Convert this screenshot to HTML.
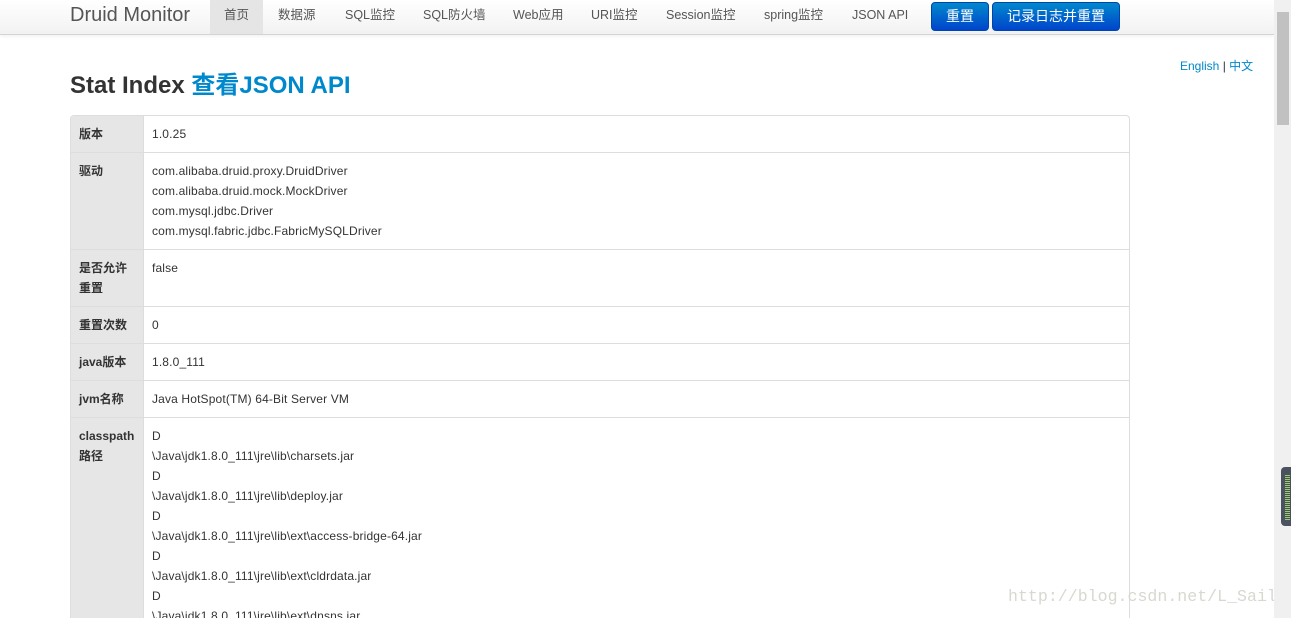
<!DOCTYPE html>
<html><head><meta charset="utf-8"><style>
*{margin:0;padding:0;box-sizing:border-box}
html{width:1291px;height:618px;overflow:hidden}
body{width:1291px;height:618px;overflow:hidden;background:#fff;font-family:"Liberation Sans","Noto Sans CJK SC",sans-serif;color:#333;font-size:12px;position:relative}
.nav{position:absolute;left:0;top:0;width:1274px;height:35px;background:linear-gradient(#fff,#f2f2f2);border-bottom:1px solid #d4d4d4;box-shadow:0 1px 4px rgba(0,0,0,.07)}
.brand{position:absolute;left:70px;top:4px;font-size:20px;color:#555}
.ni{position:absolute;top:0;height:34px;line-height:31px;font-size:12.5px;color:#555}
.act{background:#e5e5e5;left:210px;width:53px;text-align:center}
.btn{position:absolute;top:2px;height:29px;background:linear-gradient(#0088cc,#0044cc);border:1px solid #0044aa;border-radius:4px;color:#fff;font-size:14px;text-align:center;line-height:27px}
h1{position:absolute;left:70px;top:65px;font-size:24px;font-weight:bold;color:#333}
h1 span{color:#0088cc}
.lang{position:absolute;left:1180px;top:57px;font-size:12px;color:#0088cc}
.tbl{position:absolute;left:70px;top:115px;width:1060px;height:503px;border:1px solid #ddd;border-bottom:none;border-radius:4px 4px 0 0;overflow:hidden}
.lab{position:absolute;left:0;top:0;width:73px;height:100%;background:#e6e6e6;border-right:1px solid #ddd}
.row{position:absolute;left:0;width:100%;border-top:1px solid #ddd}
.l{position:absolute;left:8px;top:8px;font-weight:bold;line-height:20px;width:58px;word-break:break-all}
.v{position:absolute;left:81px;top:8px;line-height:20px;letter-spacing:.15px}
.sb{position:absolute;left:1274px;top:0;width:17px;height:618px;background:#f0f0f0}
.th{position:absolute;left:1277px;top:12px;width:12px;height:113px;background:#c1c1c1}
.wm{position:absolute;left:1008px;top:587px;font-family:"Liberation Mono",monospace;font-size:16.6px;color:#d8d8d0}
.wid{position:absolute;left:1281px;top:467px;width:12px;height:59px;background:#4a5260;border-radius:4px 0 0 4px}
.wid i{position:absolute;left:4px;top:7px;width:5px;height:46px;background:repeating-linear-gradient(transparent 0 1px,#9c6 1px 2px)}
</style></head><body>
<div class="nav">
<div class="brand">Druid Monitor</div>
<div class="ni act">首页</div>
<div class="ni" style="left:278px">数据源</div>
<div class="ni" style="left:345px">SQL监控</div>
<div class="ni" style="left:423px">SQL防火墙</div>
<div class="ni" style="left:513px">Web应用</div>
<div class="ni" style="left:591px">URI监控</div>
<div class="ni" style="left:666px">Session监控</div>
<div class="ni" style="left:764px">spring监控</div>
<div class="ni" style="left:852px">JSON API</div>
<div class="btn" style="left:931px;width:58px">重置</div>
<div class="btn" style="left:992px;width:128px">记录日志并重置</div>
</div>
<div class="lang">English <span style="color:#333">|</span> 中文</div>
<h1>Stat Index <span>查看JSON API</span></h1>
<div class="tbl"><div class="lab"></div>
<div class="row" style="top:-1px"><div class="l">版本</div><div class="v">1.0.25</div></div>
<div class="row" style="top:36px"><div class="l">驱动</div><div class="v">com.alibaba.druid.proxy.DruidDriver<br>com.alibaba.druid.mock.MockDriver<br>com.mysql.jdbc.Driver<br>com.mysql.fabric.jdbc.FabricMySQLDriver</div></div>
<div class="row" style="top:133px"><div class="l">是否允许<br>重置</div><div class="v">false</div></div>
<div class="row" style="top:190px"><div class="l">重置次数</div><div class="v">0</div></div>
<div class="row" style="top:227px"><div class="l">java版本</div><div class="v">1.8.0_111</div></div>
<div class="row" style="top:264px"><div class="l">jvm名称</div><div class="v">Java HotSpot(TM) 64-Bit Server VM</div></div>
<div class="row" style="top:301px"><div class="l">classpath<br>路径</div><div class="v">D<br>\Java\jdk1.8.0_111\jre\lib\charsets.jar<br>D<br>\Java\jdk1.8.0_111\jre\lib\deploy.jar<br>D<br>\Java\jdk1.8.0_111\jre\lib\ext\access-bridge-64.jar<br>D<br>\Java\jdk1.8.0_111\jre\lib\ext\cldrdata.jar<br>D<br>\Java\jdk1.8.0_111\jre\lib\ext\dnsns.jar</div></div>
</div>
<div class="wm">http://blog.csdn.net/L_Sail</div>
<div class="sb"></div><div class="th"></div>
<div class="wid"><i></i></div>
</body></html>
